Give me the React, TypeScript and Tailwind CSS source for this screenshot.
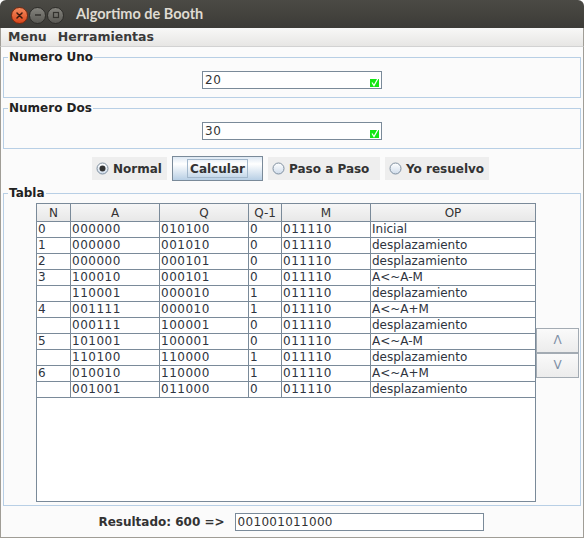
import React from 'react';

const rows: string[][] = [
  ['0', '000000', '010100', '0', '011110', 'Inicial'],
  ['1', '000000', '001010', '0', '011110', 'desplazamiento'],
  ['2', '000000', '000101', '0', '011110', 'desplazamiento'],
  ['3', '100010', '000101', '0', '011110', 'A<~A-M'],
  ['', '110001', '000010', '1', '011110', 'desplazamiento'],
  ['4', '001111', '000010', '1', '011110', 'A<~A+M'],
  ['', '000111', '100001', '0', '011110', 'desplazamiento'],
  ['5', '101001', '100001', '0', '011110', 'A<~A-M'],
  ['', '110100', '110000', '1', '011110', 'desplazamiento'],
  ['6', '010010', '110000', '1', '011110', 'A<~A+M'],
  ['', '001001', '011000', '0', '011110', 'desplazamiento'],
];

const headers = ['N', 'A', 'Q', 'Q-1', 'M', 'OP'];
const colW = ['w-[34px]', 'w-[89px]', 'w-[89px]', 'w-[33px]', 'w-[89px]', 'w-[164px]'];

const TitleBar = () => (
  <div className="h-[28px] shrink-0 rounded-t-[6px] bg-[linear-gradient(to_bottom,#4b4a45,#3c3b37)] flex items-center pl-[11px]">
    <div className="flex items-center gap-[1px] pt-[2px]">
      <div className="w-[17px] h-[17px] rounded-full border border-[#7a2a10] bg-[linear-gradient(to_bottom,#f58b5e,#d9451a)] flex items-center justify-center">
        <svg width="7" height="7" viewBox="0 0 7 7">
          <path d="M1 1L6 6M6 1L1 6" stroke="#3b1a0e" strokeWidth="1.5" strokeLinecap="round" />
        </svg>
      </div>
      <div className="w-[17px] h-[17px] rounded-full border border-[#2e2d2a] bg-[linear-gradient(to_bottom,#84837d,#5a5954)] flex items-center justify-center">
        <svg width="8" height="8" viewBox="0 0 8 8">
          <path d="M1 4H7" stroke="#33322e" strokeWidth="1.5" />
        </svg>
      </div>
      <div className="w-[17px] h-[17px] rounded-full border border-[#2e2d2a] bg-[linear-gradient(to_bottom,#84837d,#5a5954)] flex items-center justify-center">
        <svg width="8" height="8" viewBox="0 0 8 8">
          <rect x="1.5" y="1.5" width="5" height="5" fill="none" stroke="#33322e" strokeWidth="1.2" />
        </svg>
      </div>
    </div>
    <span className="ml-[12px] font-['Lato',sans-serif] font-bold text-[14.5px] text-[#dfdbd2] leading-none">
      Algortimo de Booth
    </span>
  </div>
);

const MenuBar = () => (
  <div className="h-[19px] shrink-0 flex items-center gap-[11px] pl-[7px] border-x border-b border-x-[#a09d96] border-b-[#d2d2d2] bg-[linear-gradient(to_bottom,#f8f8f7,#e7e6e4)] text-[12.5px] font-bold text-[#3a3a3a]">
    <span>Menu</span>
    <span>Herramientas</span>
  </div>
);

const CheckMark = () => (
  <svg width="10" height="11" viewBox="0 0 10 11" className="mr-[1px] mt-[2px]">
    <rect x="0" y="3" width="9" height="8" fill="#14e614" />
    <path d="M2 6.5L4 9.5L8.5 1.5" fill="none" stroke="#ffffff" strokeWidth="1.2" />
  </svg>
);

const NumberField = ({ value }: { value: string }) => (
  <div className="w-[180px] h-[18px] border border-[#7a8a99] bg-white flex items-center">
    <span className="pl-[2px] text-[12px] tracking-[0.5px] leading-none text-[#333333]">{value}</span>
    <div className="ml-auto">
      <CheckMark />
    </div>
  </div>
);

const Group = ({ title, children, className }: { title: string; children: React.ReactNode; className?: string }) => (
  <fieldset className={`mx-[2px] border border-[#b8cfe5] ${className ?? ''}`}>
    <legend className="ml-[4px] px-[1px] text-[12px] leading-[14px] font-bold text-[#222222]">{title}</legend>
    {children}
  </fieldset>
);

const Radio = ({ checked }: { checked?: boolean }) => (
  <svg width="13" height="13" viewBox="0 0 13 13">
    <defs>
      <linearGradient id="rg" x1="0" y1="0" x2="0" y2="1">
        <stop offset="0" stopColor="#ffffff" />
        <stop offset="1" stopColor="#cfdceb" />
      </linearGradient>
    </defs>
    <circle cx="6.5" cy="6.5" r="5.5" fill="url(#rg)" stroke="#7f8f9f" />
    {checked && <circle cx="6.5" cy="6.5" r="3" fill="#333333" />}
  </svg>
);

const RadioItem = ({ label, checked, w }: { label: string; checked?: boolean; w: string }) => (
  <div className={`h-[23px] ${w} bg-[#eeeeee] flex items-center pl-[4px] gap-[4px] text-[12px] font-bold text-[#333333]`}>
    <Radio checked={checked} />
    <span>{label}</span>
  </div>
);

const ArrowButton = ({ label }: { label: string }) => (
  <div className="w-[43px] h-[25px] border border-[#a3abb3] bg-[linear-gradient(to_bottom,#fafafa,#ececec)] flex items-center justify-center text-[12px] text-[#7f90a6]">
    {label}
  </div>
);

export default function App() {
  return (
    <div className="w-[584px] h-[538px] flex flex-col bg-white font-['DejaVu_Sans',sans-serif] text-[#333333]">
      <TitleBar />
      <MenuBar />
      <div className="flex-1 flex flex-col bg-[#fbfbfb] border-x border-b border-[#a09d96]">
        <Group title="Numero Uno" className="mt-[3px]">
          <div className="flex justify-center pt-[7px] pb-[8px]">
            <NumberField value="20" />
          </div>
        </Group>
        <Group title="Numero Dos" className="mt-[3px]">
          <div className="flex justify-center pt-[7px] pb-[8px]">
            <NumberField value="30" />
          </div>
        </Group>

        <div className="mt-[7px] h-[25px] flex items-center justify-center gap-[5px] pr-[3px]">
          <RadioItem label="Normal" checked w="w-[75px]" />
          <div className="w-[91px] h-[25px] border border-[#7a8a99] bg-[linear-gradient(to_bottom,#dde8f3,#ffffff_30%,#b8cfe5)] flex items-center justify-center">
            <span className="h-[19px] px-[2px] border border-[#a3b8cc] flex items-center text-[12px] font-bold text-[#333333]">
              Calcular
            </span>
          </div>
          <RadioItem label="Paso a Paso" w="w-[112px]" />
          <RadioItem label="Yo resuelvo" w="w-[104px]" />
        </div>

        <Group title="Tabla" className="mt-[5px]">
          <div className="flex items-center pl-[32px] pt-[3px] pb-[3px]">
            <div className="w-[500px] h-[299px] border border-[#7a8a99] bg-white flex flex-col text-[12px]">
              <div className="flex h-[18px] shrink-0 border-b border-[#7a8a99] bg-[linear-gradient(to_bottom,#f6f6f6,#e8e8e8)]">
                {headers.map((h, i) => (
                  <div
                    key={h}
                    className={`${colW[i]} ${i < 5 ? 'border-r border-[#7a8a99]' : ''} flex items-center justify-center text-[#333333]`}
                  >
                    {h}
                  </div>
                ))}
              </div>
              {rows.map((r, ri) => (
                <div key={ri} className="flex h-[16px] shrink-0 border-b border-[#7a8a99]">
                  {r.map((c, ci) => (
                    <div
                      key={ci}
                      className={`${colW[ci]} ${ci < 5 ? 'border-r border-[#7a8a99] tracking-[0.5px]' : ''} pl-[1px] leading-[15px] text-[#2e3440] whitespace-nowrap overflow-hidden`}
                    >
                      {c}
                    </div>
                  ))}
                </div>
              ))}
            </div>
            <div className="flex flex-col">
              <ArrowButton label="Λ" />
              <ArrowButton label="V" />
            </div>
          </div>
        </Group>

        <div className="mt-[7px] flex items-center justify-center gap-[10px] pr-[2px]">
          <span className="text-[12px] font-bold text-[#333333]">Resultado: 600 =&gt;</span>
          <div className="w-[249px] h-[18px] border border-[#7a8a99] bg-white flex items-center">
            <span className="pl-[2px] text-[12px] tracking-[0.3px] leading-none text-[#333333]">001001011000</span>
          </div>
        </div>
      </div>
    </div>
  );
}
